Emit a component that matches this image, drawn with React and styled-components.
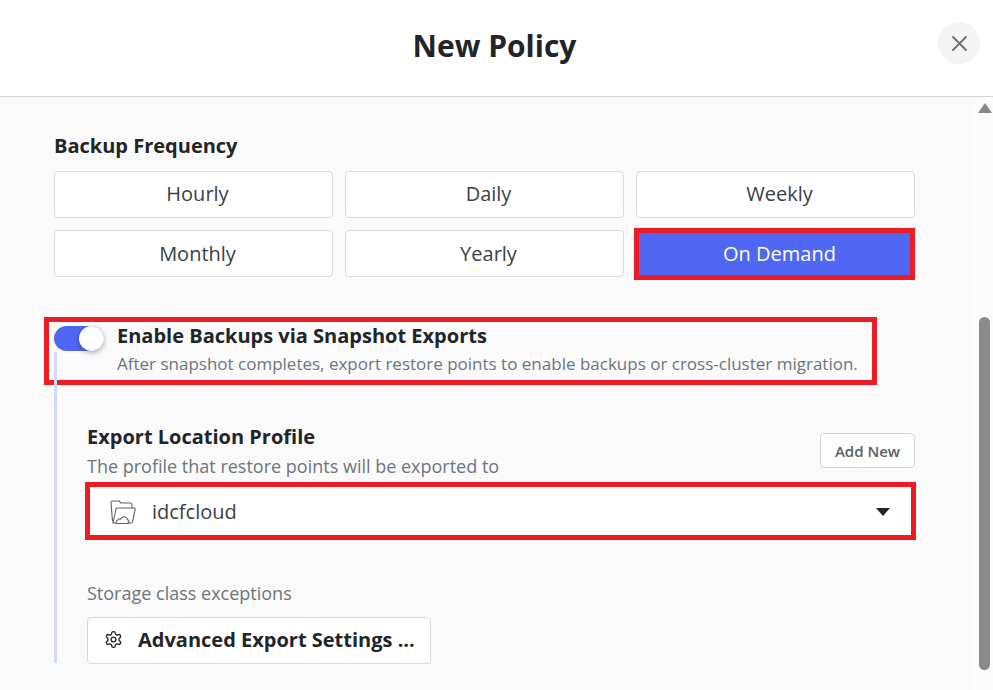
import React from "react";
import styled, { createGlobalStyle } from "styled-components";

const Global = createGlobalStyle`
  html, body { margin: 0; padding: 0; height: 100%; overflow: hidden; background: #fff; }
  * { box-sizing: border-box; }
  body { font-family: "Open Sans", "Noto Sans", sans-serif; color: #212529; }
`;

const Page = styled.div`
  width: 993px; height: 690px; display: flex; flex-direction: column; overflow: hidden;
`;
const Header = styled.header`
  position: relative; height: 97px; flex: none; background: #fff;
  border-bottom: 1px solid #d6d6d6; display: flex; align-items: center; justify-content: center;
  padding: 0 4px 5px 0;
`;
const Title = styled.h1`
  margin: 0; font-size: 30px; line-height: 40px; font-weight: 700; color: #212529;
`;
const Close = styled.button`
  position: absolute; top: 22px; right: 13px; width: 42px; height: 42px; border: 0; padding: 0;
  border-radius: 50%; background: #f4f4f4; color: #6c757d; display: flex; align-items: center; justify-content: center;
`;
const Body = styled.div`
  flex: 1; min-height: 0; display: flex; background: #fafafa;
`;
const Main = styled.main`
  flex: 1; min-width: 0; padding: 37px 59px 0 54px;
`;
const Scrollbar = styled.div`
  width: 19px; flex: none; background: #fcfcfc; display: flex; flex-direction: column; align-items: center; padding-left: 3px;
`;
const ArrowUp = styled.div`
  margin-top: 6px; width: 0; height: 0; border-left: 7px solid transparent; border-right: 7px solid transparent;
  border-bottom: 10px solid #8a8a8a;
`;
const Thumb = styled.div`
  margin: 204px 1px 0 0; width: 11px; height: 353px; border-radius: 6px; background: #8a8a8a;
`;
const SectionLabel = styled.div`
  font-size: 20px; line-height: 24px; font-weight: 700; color: #212529; margin-bottom: 13px;
`;
const FreqGrid = styled.div`
  display: grid; grid-template-columns: repeat(3, 279px); grid-auto-rows: 47px; gap: 12px;
`;
const Marked = styled.div`
  position: relative;
  &::after {
    content: ""; position: absolute; pointer-events: none; border: 5px solid #ed1c24;
    top: ${p => p.$t}px; left: ${p => p.$l}px; right: ${p => p.$r}px; bottom: ${p => p.$b}px;
  }
`;
const FreqButton = styled.button`
  width: 100%; height: 100%; font: inherit; font-size: 20px; border-radius: 4px; cursor: pointer;
  padding: 0 0 ${p => (p.$raised ? "2px" : "0")} 8px;
  border: 1px solid ${p => (p.$active ? "#4f67f2" : "#d9d9dc")};
  background: ${p => (p.$active ? "#4f67f2" : "#fff")};
  color: ${p => (p.$active ? "#fff" : "#3a3f45")};
`;
const ToggleRow = styled(Marked)`
  margin-top: 49px; display: flex; gap: 13px; height: 59px;
`;
const Track = styled.div`
  width: 50px; height: 25px; flex: none; border-radius: 13px; background: #4f67f2; position: relative;
`;
const Knob = styled.div`
  position: absolute; right: 0; top: 0; width: 25px; height: 25px; border-radius: 50%; background: #fff;
  box-shadow: 0 2px 5px rgba(0,0,0,.3);
`;
const ToggleText = styled.div`
  display: flex; flex-direction: column;
`;
const ToggleTitle = styled.div`
  font-size: 20px; line-height: 24px; font-weight: 700; color: #212529; margin-top: -2px;
`;
const Hint = styled.div`
  font-size: 17px; line-height: 22px; color: #6c757d; margin-top: 5px; white-space: nowrap;
`;
const Nested = styled.section`
  border-left: 3px solid #cfdafc; margin-top: -33px; padding: 73px 0 0 30px; height: 311px; position: relative;
`;
const ProfileHead = styled.div`
  display: flex; justify-content: space-between; align-items: flex-end;
`;
const ProfileTitle = styled.div`
  font-size: 20px; line-height: 24px; font-weight: 700; color: #212529;
`;
const ProfileHint = styled.div`
  font-size: 18px; line-height: 22px; color: #6c757d; margin-top: 6px;
`;
const AddButton = styled.button`
  width: 95px; height: 35px; font: inherit; font-size: 15px; font-weight: 600; color: #5a6068; background: #fff;
  border: 1px solid #ced4de; border-radius: 4px; margin-bottom: 9px; padding: 0;
`;
const Select = styled(Marked)`
  margin-top: 11px; height: 47px; background: #fff; display: flex; align-items: center; padding: 0 25px 0 23px;
`;
const SelectValue = styled.div`
  flex: 1; margin-left: 16px; font-size: 20px; color: #3a3f45;
`;
const Caret = styled.div`
  width: 0; height: 0; border-left: 7px solid transparent; border-right: 7px solid transparent;
  border-top: 8px solid #212529;
`;
const ExceptionLabel = styled.div`
  font-size: 18px; line-height: 24px; color: #6c757d; margin-top: 46px;
`;
const AdvancedButton = styled.button`
  margin-top: 12px; width: 344px; height: 47px; background: #fff; border: 1px solid #d9d9dc; border-radius: 4px;
  display: flex; align-items: center; font: inherit; padding: 0 0 2px 16px; gap: 15px; color: #212529;
  font-size: 20px; font-weight: 700;
`;

const FolderCloud = () => (
  <svg width="26" height="24" viewBox="0 0 26 24" fill="none" stroke="#5f6368" strokeWidth="1.1" strokeLinejoin="round" strokeLinecap="round">
    <path d="M2.5 21 L1 2.5 C1 1.5 1.5 1 2.5 1 H9 L11 3 H20.5 C21.5 3 22 3.5 22 4.5 V8" />
    <path d="M3 23 L6 9 C6.2 8.3 6.6 8 7.3 8 H24 C25 8 25.3 8.6 25.1 9.3 L22.6 21.5 C22.4 22.4 22 23 21 23 H17.5" />
    <path d="M3 23 H7" />
    <path d="M7.5 23.5 H17.5 C19.5 23.5 19.8 20 17.3 19.6 C17 17.4 14.8 16.2 12.8 17 C11.8 17.4 11.2 18.1 10.9 19 C9.8 18.6 8 19 7.6 20.2 C5.8 20.4 5.4 23.5 7.5 23.5 Z" />
  </svg>
);

const Gear = () => (
  <svg width="19" height="19" viewBox="0 0 24 24" fill="none" stroke="#212529" strokeWidth="1.7" strokeLinecap="round" strokeLinejoin="round">
    <path d="M12.22 2h-.44a2 2 0 0 0-2 2v.18a2 2 0 0 1-1 1.73l-.43.25a2 2 0 0 1-2 0l-.15-.08a2 2 0 0 0-2.73.73l-.22.38a2 2 0 0 0 .73 2.73l.15.1a2 2 0 0 1 1 1.72v.51a2 2 0 0 1-1 1.74l-.15.09a2 2 0 0 0-.73 2.73l.22.38a2 2 0 0 0 2.73.73l.15-.08a2 2 0 0 1 2 0l.43.25a2 2 0 0 1 1 1.73V20a2 2 0 0 0 2 2h.44a2 2 0 0 0 2-2v-.18a2 2 0 0 1 1-1.73l.43-.25a2 2 0 0 1 2 0l.15.08a2 2 0 0 0 2.73-.73l.22-.39a2 2 0 0 0-.73-2.73l-.15-.08a2 2 0 0 1-1-1.74v-.5a2 2 0 0 1 1-1.74l.15-.09a2 2 0 0 0 .73-2.73l-.22-.38a2 2 0 0 0-2.73-.73l-.15.08a2 2 0 0 1-2 0l-.43-.25a2 2 0 0 1-1-1.73V4a2 2 0 0 0-2-2z" />
    <circle cx="12" cy="12" r="3" />
  </svg>
);

const CloseIcon = () => (
  <svg width="17" height="17" viewBox="0 0 17 17" fill="none" stroke="currentColor" strokeWidth="2" strokeLinecap="round">
    <path d="M2 2 L15 15 M15 2 L2 15" />
  </svg>
);

const options = ["Hourly", "Daily", "Weekly", "Monthly", "Yearly"];

export default function App() {
  return (
    <Page>
      <Global />
      <Header>
        <Title>New Policy</Title>
        <Close aria-label="Close"><CloseIcon /></Close>
      </Header>
      <Body>
        <Main>
          <SectionLabel>Backup Frequency</SectionLabel>
          <FreqGrid>
            {options.map((o, i) => <FreqButton key={o} $raised={i < 3}>{o}</FreqButton>)}
            <Marked $t={-2} $l={-2} $r={0} $b={-3}>
              <FreqButton $active>On Demand</FreqButton>
            </Marked>
          </FreqGrid>
          <ToggleRow $t={-9} $l={-10} $r={38} $b={0}>
            <Track><Knob /></Track>
            <ToggleText>
              <ToggleTitle>Enable Backups via Snapshot Exports</ToggleTitle>
              <Hint>After snapshot completes, export restore points to enable backups or cross-cluster migration.</Hint>
            </ToggleText>
          </ToggleRow>
          <Nested>
            <ProfileHead>
              <div>
                <ProfileTitle>Export Location Profile</ProfileTitle>
                <ProfileHint>The profile that restore points will be exported to</ProfileHint>
              </div>
              <AddButton>Add New</AddButton>
            </ProfileHead>
            <Select $t={-6} $l={-2} $r={-1} $b={-5}>
              <FolderCloud />
              <SelectValue>idcfcloud</SelectValue>
              <Caret />
            </Select>
            <ExceptionLabel>Storage class exceptions</ExceptionLabel>
            <AdvancedButton><Gear />Advanced Export Settings ...</AdvancedButton>
          </Nested>
        </Main>
        <Scrollbar>
          <ArrowUp />
          <Thumb />
        </Scrollbar>
      </Body>
    </Page>
  );
}
